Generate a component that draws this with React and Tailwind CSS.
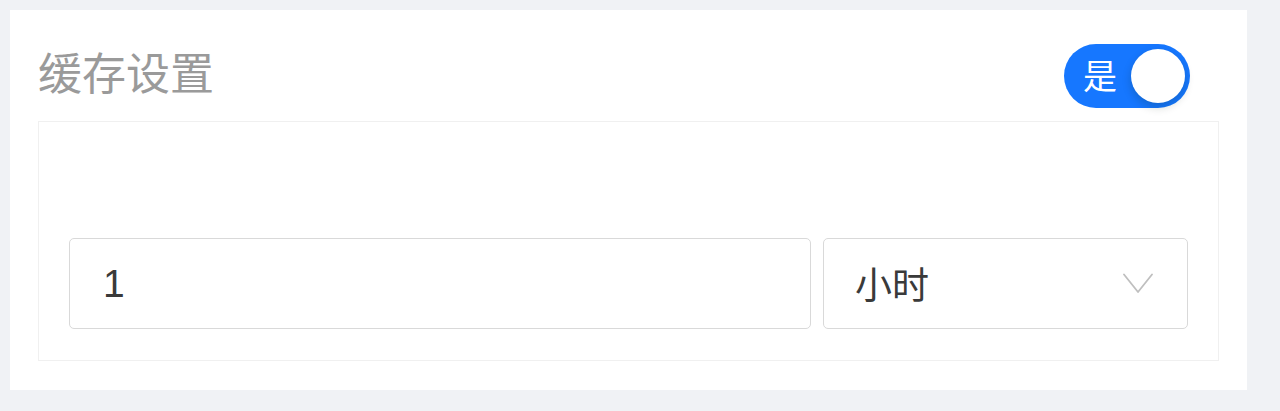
export default function App() {
  return (
    <div className="w-[1280px] h-[411px] bg-[#f0f2f5] pl-[10px] pt-[10px]" style={{ fontFamily: '"Liberation Sans", "Noto Sans CJK SC", sans-serif' }}>
      <div className="w-[1237px] bg-white pt-[34px] px-[28px] pb-[29px]">
        {/* header */}
        <div className="flex items-center justify-between h-[64px]">
          <h2 className="text-[44px] leading-none text-[#9a9a9a] font-normal mb-[10px]" style={{ fontFamily: '"Noto Sans CJK SC", sans-serif' }}>
            缓存设置
          </h2>
          <button className="mr-[29px] w-[126px] h-[64px] rounded-full bg-[#1677ff] flex items-center justify-between pl-[19px] pr-[5px]">
            <span className="text-white text-[34px] leading-none mb-[2px]" style={{ fontFamily: '"Noto Sans CJK SC", sans-serif' }}>是</span>
            <span className="w-[54px] h-[54px] rounded-full bg-white shadow-[0_4px_10px_rgba(0,35,11,0.2)]"></span>
          </button>
        </div>

        {/* body */}
        <div className="mt-[13px] border border-[#f0f0f0] pt-[116px] px-[30px] pb-[31px]">
          <div className="flex gap-[12px]">
            <div className="flex-1 h-[91px] border border-[#d9d9d9] rounded-[5px] flex items-center pl-[33px]">
              <span className="text-[39px] text-[#3a3a3a] leading-none">1</span>
            </div>
            <div className="w-[365px] h-[91px] border border-[#d9d9d9] rounded-[5px] flex items-center justify-between pl-[31px] pr-[34px]">
              <span className="text-[37px] text-[#3a3a3a] leading-none" style={{ fontFamily: '"Noto Sans CJK SC", sans-serif' }}>小时</span>
              <svg width="30" height="21" viewBox="0 0 30 21" fill="none">
                <path d="M1 1.5 L15 19 L29 1.5" stroke="#bfbfbf" strokeWidth="1.8" strokeLinecap="round" strokeLinejoin="round" />
              </svg>
            </div>
          </div>
        </div>
      </div>
    </div>
  );
}
